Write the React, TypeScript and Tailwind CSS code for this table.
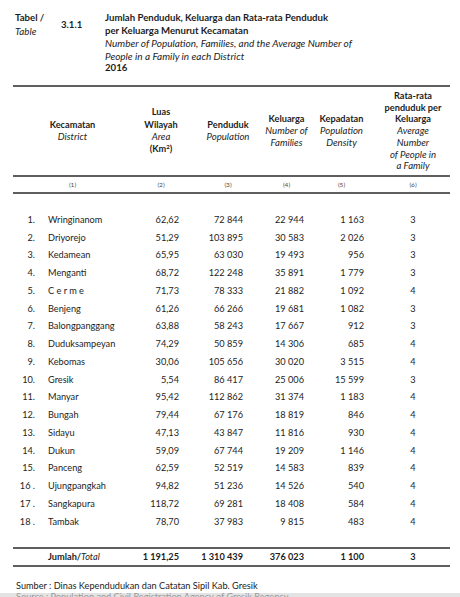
const rows: [string, string, string, string, string, string, string][] = [
  ["1.", "Wringinanom", "62,62", "72 844", "22 944", "1 163", "3"],
  ["2.", "Driyorejo", "51,29", "103 895", "30 583", "2 026", "3"],
  ["3.", "Kedamean", "65,95", "63 030", "19 493", "956", "3"],
  ["4.", "Menganti", "68,72", "122 248", "35 891", "1 779", "3"],
  ["5.", "C e r m e", "71,73", "78 333", "21 882", "1 092", "4"],
  ["6.", "Benjeng", "61,26", "66 266", "19 681", "1 082", "3"],
  ["7.", "Balongpanggang", "63,88", "58 243", "17 667", "912", "3"],
  ["8.", "Duduksampeyan", "74,29", "50 859", "14 306", "685", "4"],
  ["9.", "Kebomas", "30,06", "105 656", "30 020", "3 515", "4"],
  ["10.", "Gresik", "5,54", "86 417", "25 006", "15 599", "3"],
  ["11.", "Manyar", "95,42", "112 862", "31 374", "1 183", "4"],
  ["12.", "Bungah", "79,44", "67 176", "18 819", "846", "4"],
  ["13.", "Sidayu", "47,13", "43 847", "11 816", "930", "4"],
  ["14.", "Dukun", "59,09", "67 744", "19 209", "1 146", "4"],
  ["15.", "Panceng", "62,59", "52 519", "14 583", "839", "4"],
  ["16 .", "Ujungpangkah", "94,82", "51 236", "14 526", "540", "4"],
  ["17 .", "Sangkapura", "118,72", "69 281", "18 408", "584", "4"],
  ["18 .", "Tambak", "78,70", "37 983", "9 815", "483", "4"],
];

function Rule() {
  return <div className="h-[2px] w-full bg-[#5f5f5f]" />;
}

export default function App() {
  return (
    <div className="relative h-[597px] w-[460px] overflow-hidden bg-white font-['Lato',sans-serif] text-[9.2px] text-[#1d1d1d]">
      {/* Title */}
      <div className="flex h-[85px] pl-[15px] pt-[12px] leading-[12.5px]">
        <div className="w-[46px]">
          <div className="text-[9.6px] font-bold">Tabel /</div>
          <div className="text-[9.8px] italic">Table</div>
        </div>
        <div className="mt-[7px] w-[44px] text-[9.6px] font-bold">3.1.1</div>
        <div>
          <div className="text-[9.6px] font-bold">Jumlah Penduduk, Keluarga dan Rata-rata Penduduk</div>
          <div className="text-[9.6px] font-bold">per Keluarga Menurut Kecamatan</div>
          <div className="text-[10px] italic">Number of Population, Families, and the Average Number of</div>
          <div className="text-[10px] italic">People in a Family in each District</div>
          <div className="text-[9.6px] font-bold">2016</div>
        </div>
      </div>

      <div className="mx-[13px] w-[437px]">
        <Rule />
        {/* Column headings */}
        <div className="flex h-[88px] items-center text-center leading-[11.8px]">
          <div className="flex w-[119px] justify-center">
            <div className="whitespace-nowrap">
              <div className="font-bold">Kecamatan</div>
              <div className="text-[9.6px] italic">District</div>
            </div>
          </div>
          <div className="flex w-[58px] justify-center">
            <div className="whitespace-nowrap leading-[12.3px]">
              <div className="font-bold">Luas</div>
              <div className="font-bold">Wilayah</div>
              <div className="text-[9.6px] italic">Area</div>
              <div className="font-bold">
                (Km<sup className="text-[6px]">2</sup>)
              </div>
            </div>
          </div>
          <div className="flex w-[76px] justify-center">
            <div className="whitespace-nowrap">
              <div className="font-bold">Penduduk</div>
              <div className="text-[9.6px] italic">Population</div>
            </div>
          </div>
          <div className="flex w-[41px] justify-center">
            <div className="whitespace-nowrap">
              <div className="font-bold">Keluarga</div>
              <div className="text-[9.6px] italic">Number of</div>
              <div className="text-[9.6px] italic">Families</div>
            </div>
          </div>
          <div className="flex w-[69px] justify-center">
            <div className="whitespace-nowrap">
              <div className="font-bold">Kepadatan</div>
              <div className="text-[9.6px] italic">Population</div>
              <div className="text-[9.6px] italic">Density</div>
            </div>
          </div>
          <div className="flex w-[74px] justify-center">
            <div className="whitespace-nowrap">
              <div className="font-bold">Rata-rata</div>
              <div className="font-bold">penduduk per</div>
              <div className="font-bold">Keluarga</div>
              <div className="text-[9.6px] italic">Average</div>
              <div className="text-[9.6px] italic">Number</div>
              <div className="text-[9.6px] italic">of People in</div>
              <div className="text-[9.6px] italic">a Family</div>
            </div>
          </div>
        </div>
        <Rule />
        {/* Column numbers */}
        <div className="flex h-[15px] items-center text-center text-[6.5px] text-[#4a4a4a]">
          <div className="w-[119px]">(1)</div>
          <div className="w-[58px]">(2)</div>
          <div className="w-[76px]">(3)</div>
          <div className="w-[41px]">(4)</div>
          <div className="w-[69px]">(5)</div>
          <div className="w-[74px]">(6)</div>
        </div>
        <Rule />

        {/* Data */}
        <div className="pb-[16.5px] pt-[17px]">
          {rows.map((r) => (
            <div key={r[0]} className="flex h-[17.75px] items-center whitespace-nowrap">
              <div className="flex w-[119px]">
                <div className="w-[22px] text-right">{r[0]}</div>
                <div className="pl-[13px]">{r[1]}</div>
              </div>
              <div className="w-[58px] pr-[11px] text-right">{r[2]}</div>
              <div className="w-[76px] pr-[23px] text-right">{r[3]}</div>
              <div className="w-[41px] pr-[3px] text-right">{r[4]}</div>
              <div className="w-[69px] pr-[12px] text-right">{r[5]}</div>
              <div className="w-[74px] text-center">{r[6]}</div>
            </div>
          ))}
        </div>

        <Rule />
        <div className="flex h-[16px] items-center whitespace-nowrap font-bold">
          <div className="w-[119px] pl-[35px]">
            Jumlah/<span className="font-normal italic">Total</span>
          </div>
          <div className="w-[58px] pr-[11px] text-right">1 191,25</div>
          <div className="w-[76px] pr-[23px] text-right">1 310 439</div>
          <div className="w-[41px] pr-[3px] text-right">376 023</div>
          <div className="w-[69px] pr-[12px] text-right">1 100</div>
          <div className="w-[74px] text-center">3</div>
        </div>
        <Rule />
      </div>

      {/* Source */}
      <div className="mt-[13px] pl-[16px] leading-[12px]">
        Sumber : Dinas Kependudukan dan Catatan Sipil Kab. Gresik
      </div>
      <div className="mt-[1px] h-[12px] bg-[#e3e3e3] pl-[16px] leading-[8px] text-[#9a9a9a]">
        Source : Population and Civil Registration Agency of Gresik Regency
      </div>
    </div>
  );
}
